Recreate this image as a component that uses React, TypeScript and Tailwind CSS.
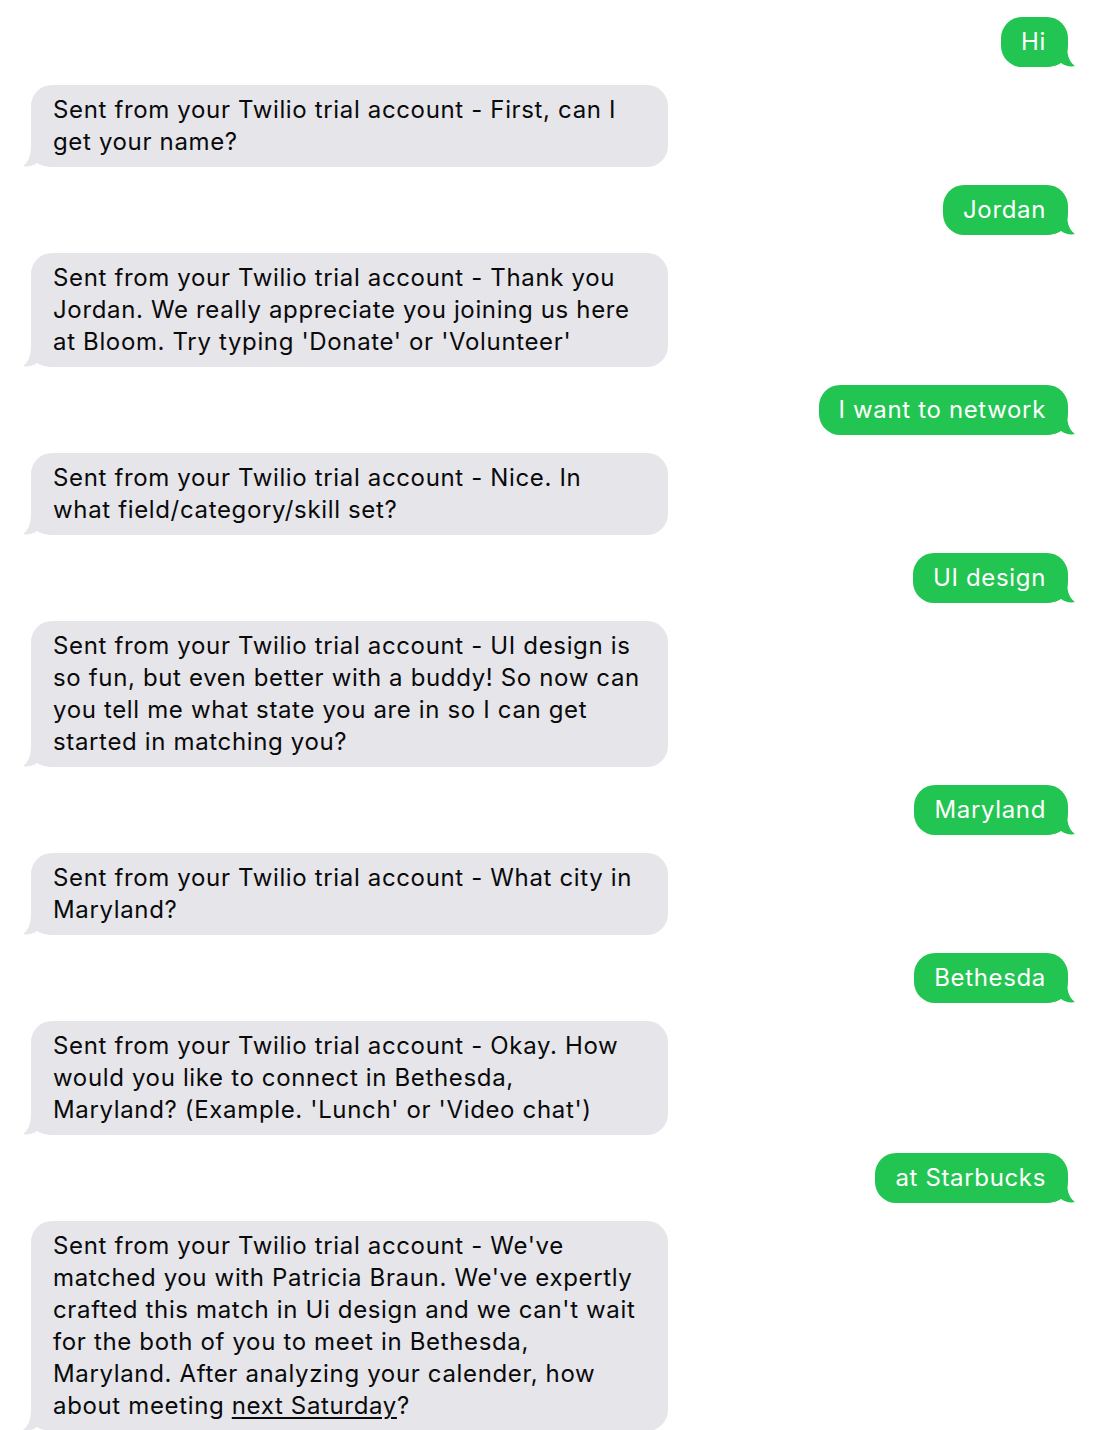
import React from "react";

type Msg = { from: "me" | "bot"; lines: React.ReactNode[] };

const PREFIX = "Sent from your Twilio trial account - ";

const messages: Msg[] = [
  { from: "me", lines: ["Hi"] },
  { from: "bot", lines: [PREFIX + "First, can I", "get your name?"] },
  { from: "me", lines: ["Jordan"] },
  {
    from: "bot",
    lines: [
      PREFIX + "Thank you",
      "Jordan. We really appreciate you joining us here",
      "at Bloom. Try typing 'Donate' or 'Volunteer'",
    ],
  },
  { from: "me", lines: ["I want to network"] },
  { from: "bot", lines: [PREFIX + "Nice. In", "what field/category/skill set?"] },
  { from: "me", lines: ["UI design"] },
  {
    from: "bot",
    lines: [
      PREFIX + "UI design is",
      "so fun, but even better with a buddy! So now can",
      "you tell me what state you are in so I can get",
      "started in matching you?",
    ],
  },
  { from: "me", lines: ["Maryland"] },
  { from: "bot", lines: [PREFIX + "What city in", "Maryland?"] },
  { from: "me", lines: ["Bethesda"] },
  {
    from: "bot",
    lines: [
      PREFIX + "Okay. How",
      "would you like to connect in Bethesda,",
      "Maryland? (Example. 'Lunch' or 'Video chat')",
    ],
  },
  { from: "me", lines: ["at Starbucks"] },
  {
    from: "bot",
    lines: [
      PREFIX + "We've",
      "matched you with Patricia Braun. We've expertly",
      "crafted this match in Ui design and we can't wait",
      "for the both of you to meet in Bethesda,",
      "Maryland. After analyzing your calender, how",
      <>
        about meeting <span className="underline underline-offset-[3px]">next Saturday</span>?
      </>,
    ],
  },
];

// bubble tail, drawn for the right side; flipped for the left
function Tail({ color, side }: { color: string; side: "left" | "right" }) {
  return (
    <svg
      width="22"
      height="24"
      viewBox="0 0 22 24"
      className={
        side === "right"
          ? "absolute -right-[7px] bottom-0"
          : "absolute -left-[8px] bottom-0 -scale-x-100"
      }
    >
      <path
        d="M0 0 L14 0 C14 10 15 18 22 23 C17 24 12 23 8 20 C5 22 2 23 0 23 Z"
        fill={color}
      />
    </svg>
  );
}

function Bubble({ msg }: { msg: Msg }) {
  if (msg.from === "me") {
    return (
      <div className="flex justify-end pr-[26px]">
        <div className="relative bg-[#23c552] text-white rounded-[21px] pl-[20px] pr-[22px] py-[9px]">
          <Tail color="#23c552" side="right" />
          <div className="relative">{msg.lines[0]}</div>
        </div>
      </div>
    );
  }
  return (
    <div className="flex justify-start pl-[31px]">
      <div className="relative w-[637px] bg-[#e5e5ea] text-[#0a0a0a] rounded-[21px] pl-[22px] pr-[16px] py-[9px]">
        <Tail color="#e5e5ea" side="left" />
        <div className="relative">
          {msg.lines.map((l, i) => (
            <div key={i} className="whitespace-nowrap">
              {l}
            </div>
          ))}
        </div>
      </div>
    </div>
  );
}

export default function App() {
  return (
    <main className="min-h-screen bg-white font-['Inter','Noto_Sans',sans-serif] text-[24px] leading-[32px] tracking-[0.65px]">
      <div className="flex flex-col gap-[18px] pt-[17px]">
        {messages.map((m, i) => (
          <Bubble key={i} msg={m} />
        ))}
      </div>
    </main>
  );
}
